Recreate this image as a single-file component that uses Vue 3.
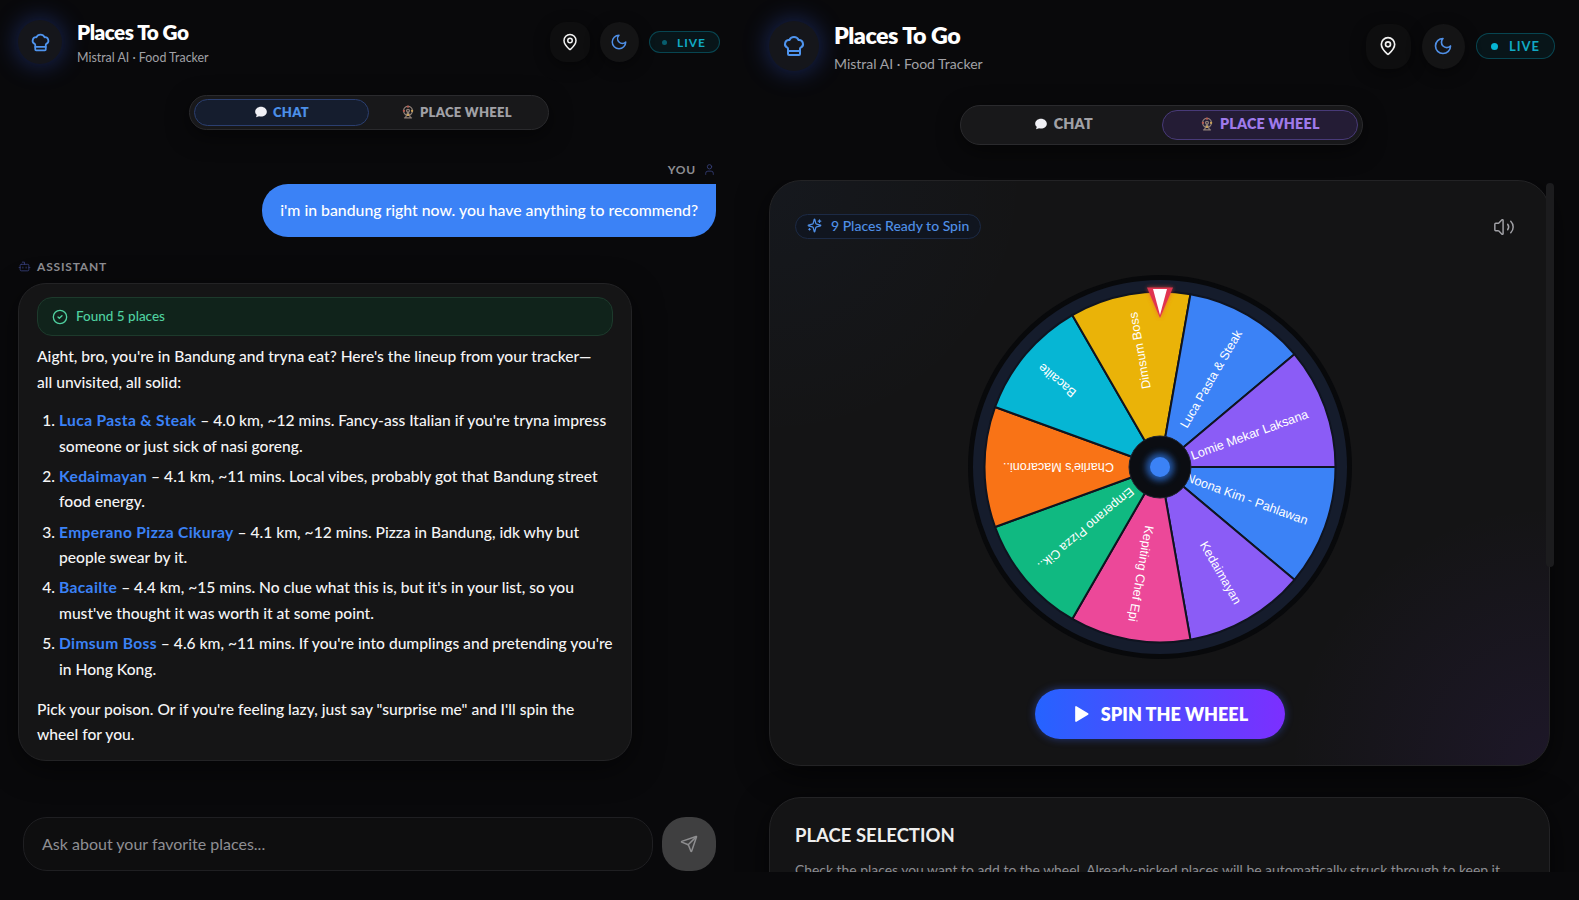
<script setup>
const places = [
  { name: 'Luca Pasta & Steak', rest: " – 4.0 km, ~12 mins. Fancy-ass Italian if you're tryna impress someone or just sick of nasi goreng." },
  { name: 'Kedaimayan', rest: ' – 4.1 km, ~11 mins. Local vibes, probably got that Bandung street food energy.' },
  { name: 'Emperano Pizza Cikuray', rest: ' – 4.1 km, ~12 mins. Pizza in Bandung, idk why but people swear by it.' },
  { name: 'Bacailte', rest: " – 4.4 km, ~15 mins. No clue what this is, but it's in your list, so you must've thought it was worth it at some point." },
  { name: 'Dimsum Boss', rest: " – 4.6 km, ~11 mins. If you're into dumplings and pretending you're in Hong Kong." }
]

const R = 175.5
const slices = [
  { label: 'Noona Kim - Pahlawan', color: '#3b82f6' },
  { label: 'Kedaimayan', color: '#8b5cf6' },
  { label: 'Kepiting Chef Epi', color: '#ec4899' },
  { label: 'Emperano Pizza Cik..', color: '#10b981' },
  { label: "Charlie's Macaroni..", color: '#f97316' },
  { label: 'Bacailte', color: '#06b6d4' },
  { label: 'Dimsum Boss', color: '#eab308' },
  { label: 'Luca Pasta & Steak', color: '#3b82f6' },
  { label: 'Lomie Mekar Laksana', color: '#8b5cf6' }
].map((s, i) => {
  const a0 = (i * 40 * Math.PI) / 180
  const a1 = ((i + 1) * 40 * Math.PI) / 180
  const x0 = R * Math.cos(a0)
  const y0 = R * Math.sin(a0)
  const x1 = R * Math.cos(a1)
  const y1 = R * Math.sin(a1)
  return {
    ...s,
    d: `M0 0L${x0.toFixed(2)} ${y0.toFixed(2)}A${R} ${R} 0 0 1 ${x1.toFixed(2)} ${y1.toFixed(2)}Z`,
    mid: i * 40 + 20
  }
})
</script>

<template>
  <div class="app">
    <!-- chat view -->
    <section class="panel chat">
      <header class="head">
        <div class="brand">
          <div class="logo">
            <svg viewBox="0 0 24 24"><path d="M17 21a1 1 0 0 0 1-1v-5.35c0-.457.316-.844.727-1.041a4 4 0 0 0-2.134-7.589 5 5 0 0 0-9.186 0 4 4 0 0 0-2.134 7.588c.411.198.727.585.727 1.041V20a1 1 0 0 0 1 1Z"/><path d="M6 17h12"/></svg>
          </div>
          <div class="titles">
            <h1>Places To Go</h1>
            <p>Mistral AI · Food Tracker</p>
          </div>
        </div>
        <div class="actions">
          <button class="round pin">
            <svg viewBox="0 0 24 24"><path d="M20 10c0 4.993-5.539 10.193-7.399 11.799a1 1 0 0 1-1.202 0C9.539 20.193 4 14.993 4 10a8 8 0 0 1 16 0"/><circle cx="12" cy="10" r="3"/></svg>
          </button>
          <button class="round moon">
            <svg viewBox="0 0 24 24"><path d="M12 3a6 6 0 0 0 9 9 9 9 0 1 1-9-9Z"/></svg>
          </button>
          <div class="live"><i></i>LIVE</div>
        </div>
      </header>

      <div class="tabs-wrap">
        <div class="tabs">
          <button class="tab on-blue">
            <svg class="bubble" viewBox="0 0 24 24"><path d="M12 3c5.500 0 10 3.700 10 8.400s-4.500 8.400-10 8.400c-1.200 0-2.300-.2-3.300-.5L3.500 21l1.300-4.300C3 15.200 2 13.400 2 11.400 2 6.700 6.500 3 12 3Z"/></svg>
            CHAT
          </button>
          <button class="tab">
            <svg class="ferris" viewBox="0 0 24 24"><path d="M8 21l4-9 4 9M6 22h12"/><circle cx="12" cy="10" r="7.500"/><circle cx="12" cy="10" r="2.500"/><circle cx="12" cy="2.800" r="2" class="c1"/><circle cx="19" cy="10" r="2" class="c2"/><circle cx="5" cy="10" r="2" class="c1"/><circle cx="12" cy="17" r="2" class="c2"/></svg>
            PLACE WHEEL
          </button>
        </div>
      </div>

      <div class="who you">
        <span>YOU</span>
        <svg viewBox="0 0 24 24"><path d="M19 21v-2a4 4 0 0 0-4-4H9a4 4 0 0 0-4 4v2"/><circle cx="12" cy="7" r="4"/></svg>
      </div>
      <div class="user-row">
        <div class="bubble-msg">i'm in bandung right now. you have anything to recommend?</div>
      </div>

      <div class="who bot">
        <svg viewBox="0 0 24 24"><path d="M12 8V4H8"/><rect width="16" height="12" x="4" y="8" rx="2"/><path d="M2 14h2"/><path d="M20 14h2"/><path d="M15 13v2"/><path d="M9 13v2"/></svg>
        <span>ASSISTANT</span>
      </div>
      <article class="answer">
        <div class="found">
          <svg viewBox="0 0 24 24"><circle cx="12" cy="12" r="10"/><path d="m9 12 2 2 4-4"/></svg>
          Found 5 places
        </div>
        <p>Aight, bro, you're in Bandung and tryna eat? Here's the lineup from your tracker—<br>all unvisited, all solid:</p>
        <ol>
          <li v-for="p in places" :key="p.name"><b>{{ p.name }}</b>{{ p.rest }}</li>
        </ol>
        <p>Pick your poison. Or if you're feeling lazy, just say "surprise me" and I'll spin the wheel for you.</p>
      </article>

      <div class="composer">
        <div class="input">Ask about your favorite places...</div>
        <button class="send">
          <svg viewBox="0 0 24 24"><path d="M14.536 21.686a.5.5 0 0 0 .937-.024l6.5-19a.496.496 0 0 0-.635-.635l-19 6.500a.5.5 0 0 0-.024.937l7.930 3.180a2 2 0 0 1 1.112 1.110z"/><path d="m21.854 2.147-10.940 10.939"/></svg>
        </button>
      </div>
    </section>

    <!-- wheel view, same app at a larger zoom -->
    <section class="panel wheel">
      <header class="head">
        <div class="brand">
          <div class="logo">
            <svg viewBox="0 0 24 24"><path d="M17 21a1 1 0 0 0 1-1v-5.35c0-.457.316-.844.727-1.041a4 4 0 0 0-2.134-7.589 5 5 0 0 0-9.186 0 4 4 0 0 0-2.134 7.588c.411.198.727.585.727 1.041V20a1 1 0 0 0 1 1Z"/><path d="M6 17h12"/></svg>
          </div>
          <div class="titles">
            <h1>Places To Go</h1>
            <p>Mistral AI · Food Tracker</p>
          </div>
        </div>
        <div class="actions">
          <button class="round pin">
            <svg viewBox="0 0 24 24"><path d="M20 10c0 4.993-5.539 10.193-7.399 11.799a1 1 0 0 1-1.202 0C9.539 20.193 4 14.993 4 10a8 8 0 0 1 16 0"/><circle cx="12" cy="10" r="3"/></svg>
          </button>
          <button class="round moon">
            <svg viewBox="0 0 24 24"><path d="M12 3a6 6 0 0 0 9 9 9 9 0 1 1-9-9Z"/></svg>
          </button>
          <div class="live"><i></i>LIVE</div>
        </div>
      </header>

      <div class="tabs-wrap">
        <div class="tabs">
          <button class="tab">
            <svg class="bubble" viewBox="0 0 24 24"><path d="M12 3c5.500 0 10 3.700 10 8.400s-4.500 8.400-10 8.400c-1.200 0-2.300-.2-3.300-.5L3.500 21l1.300-4.300C3 15.200 2 13.400 2 11.400 2 6.700 6.500 3 12 3Z"/></svg>
            CHAT
          </button>
          <button class="tab on-violet">
            <svg class="ferris" viewBox="0 0 24 24"><path d="M8 21l4-9 4 9M6 22h12"/><circle cx="12" cy="10" r="7.500"/><circle cx="12" cy="10" r="2.500"/><circle cx="12" cy="2.800" r="2" class="c1"/><circle cx="19" cy="10" r="2" class="c2"/><circle cx="5" cy="10" r="2" class="c1"/><circle cx="12" cy="17" r="2" class="c2"/></svg>
            PLACE WHEEL
          </button>
        </div>
      </div>

      <div class="scroller">
        <div class="thumb"></div>
        <div class="card spin-card">
          <div class="spin-top">
            <div class="ready">
              <svg viewBox="0 0 24 24"><path d="M9.937 15.5A2 2 0 0 0 8.5 14.063l-6.135-1.582a.5.5 0 0 1 0-.962L8.5 9.936A2 2 0 0 0 9.937 8.5l1.582-6.135a.5.5 0 0 1 .963 0L14.063 8.5A2 2 0 0 0 15.5 9.937l6.135 1.581a.5.5 0 0 1 0 .964L15.5 14.063a2 2 0 0 0-1.437 1.437l-1.582 6.135a.5.5 0 0 1-.963 0z"/><path d="M20 3v4"/><path d="M22 5h-4"/><path d="M4 17v2"/><path d="M5 18H3"/></svg>
              9 Places Ready to Spin
            </div>
            <svg class="sound" viewBox="0 0 24 24"><path d="M11 4.702a.705.705 0 0 0-1.203-.498L6.413 7.587A1.4 1.4 0 0 1 5.416 8H3a1 1 0 0 0-1 1v6a1 1 0 0 0 1 1h2.416a1.4 1.4 0 0 1 .997.413l3.383 3.384A.705.705 0 0 0 11 19.298z"/><path d="M16 9a5 5 0 0 1 0 6"/><path d="M19.364 18.364a9 9 0 0 0 0-12.728"/></svg>
          </div>

          <svg class="wheel-svg" viewBox="-195 -195 390 390" width="390" height="390">
            <defs>
              <filter id="pointer-glow" x="-50%" y="-50%" width="200%" height="200%">
                <feGaussianBlur stdDeviation="2" />
              </filter>
              <filter id="dot-glow" x="-100%" y="-100%" width="300%" height="300%">
                <feGaussianBlur stdDeviation="3" />
              </filter>
            </defs>
            <circle r="192" fill="#08090b" />
            <circle r="187" fill="#151c2c" />
            <g v-for="s in slices" :key="s.label + s.mid">
              <path :d="s.d" :fill="s.color" stroke="#0f1420" stroke-width="2" />
              <text
                :transform="`rotate(${s.mid})`"
                x="157"
                y="4.500"
                text-anchor="end"
                class="slice-label"
              >{{ s.label }}</text>
            </g>
            <circle r="31" fill="#0b0d12" stroke="#1e2330" stroke-width="1" />
            <circle r="14" fill="#2f7bf0" opacity=".65" filter="url(#dot-glow)" />
            <circle r="10" fill="#3b82f6" />
            <path d="M-13 -179.500H13L0 -149Z" fill="#f0533a" opacity=".75" filter="url(#pointer-glow)" />
            <path d="M-13 -179.500H13L0 -149Z" fill="#e0344f" />
            <path d="M-7 -178H7L0 -152Z" fill="#fff" />
          </svg>

          <div class="spin-row">
            <button class="spin">
              <svg viewBox="0 0 24 24"><path d="M6 3.500v17l14-8.500Z"/></svg>
              SPIN THE WHEEL
            </button>
          </div>
        </div>

        <div class="card select-card">
          <h2>PLACE SELECTION</h2>
          <p>Check the places you want to add to the wheel. Already-picked places will be automatically struck through to keep it</p>
        </div>
      </div>
    </section>
  </div>
</template>

<style>
html, body {
  margin: 0;
  background: #09090b;
}
</style>

<style scoped>
.app {
  display: flex;
  width: 1579px;
  height: 900px;
  overflow: hidden;
  background: #09090b;
  color: #fff;
  font-family: Lato, "Noto Sans", sans-serif;
}

.panel {
  box-sizing: border-box;
  height: 900px;
  display: flex;
  flex-direction: column;
  flex: none;
}

.chat {
  width: 734px;
  padding: 0 18px;
}

.wheel {
  width: 845px;
  padding: 0 29px 0 35px;
}

svg {
  fill: none;
  stroke: currentColor;
  stroke-width: 2;
  stroke-linecap: round;
  stroke-linejoin: round;
  display: block;
}

button {
  font-family: inherit;
  border: none;
  cursor: pointer;
  padding: 0;
}

/* header */
.head {
  display: flex;
  justify-content: space-between;
  align-items: center;
}

.brand {
  display: flex;
  align-items: center;
}

.titles {
  padding-top: 3px;
}

.logo {
  display: flex;
  align-items: center;
  justify-content: center;
  border-radius: 50%;
  background: #15161b;
  color: #4f94ee;
  box-shadow: 0 0 26px rgba(59, 100, 246, 0.38);
}

h1 {
  margin: 0;
  font-weight: 800;
  letter-spacing: -0.5px;
}

.brand p {
  margin: 0;
  color: #a1a1a6;
}

.actions {
  display: flex;
  align-items: center;
}

.round {
  display: flex;
  align-items: center;
  justify-content: center;
  box-shadow: 0 4px 16px rgba(0, 0, 0, 0.45);
}

.pin {
  color: #f2f2f2;
  background: #0e0e0f;
}

.moon {
  color: #4f8fe6;
  background: #141415;
}

.live {
  display: flex;
  align-items: center;
  box-sizing: border-box;
  border: 1px solid rgba(6, 182, 212, 0.3);
  background: rgba(6, 182, 212, 0.07);
  color: #11a9c4;
  font-weight: 700;
  letter-spacing: 1px;
}

.live i {
  display: block;
  border-radius: 50%;
  background: #06b6d4;
}

.chat .head {
  height: 84px;
  margin-right: -4px;
}

.chat .logo {
  width: 44px;
  height: 44px;
  margin-right: 15px;
}

.chat .logo svg {
  width: 21px;
  height: 21px;
}

.chat h1 {
  font-size: 20.700px;
  line-height: 26px;
}

.chat .brand p {
  font-size: 12.400px;
  line-height: 20px;
  margin-top: 3px;
}

.chat .actions {
  gap: 10px;
}

.chat .round {
  width: 40px;
  height: 40px;
  border-radius: 16px;
}

.chat .moon {
  width: 39px;
  border-radius: 50%;
}

.chat .round svg {
  width: 18px;
  height: 18px;
}

.chat .live {
  height: 22px;
  padding: 0 13px 0 12px;
  gap: 10px;
  border-radius: 11px;
  font-size: 12px;
}

.chat .live i {
  width: 5px;
  height: 5px;
  opacity: 0.45;
}

.wheel .head {
  height: 92px;
  margin-right: -5px;
}

.wheel .logo {
  width: 50px;
  height: 50px;
  margin-right: 15px;
}

.wheel .logo svg {
  width: 24px;
  height: 24px;
}

.wheel h1 {
  font-size: 23.300px;
  line-height: 30px;
}

.wheel .brand p {
  font-size: 14px;
  line-height: 22px;
  margin-top: 3px;
}

.wheel .actions {
  gap: 11px;
}

.wheel .round {
  width: 45px;
  height: 45px;
  border-radius: 18px;
}

.wheel .moon {
  width: 43px;
  border-radius: 50%;
}

.wheel .round svg {
  width: 20px;
  height: 20px;
}

.wheel .live {
  height: 26px;
  padding: 0 14px;
  gap: 11px;
  border-radius: 13px;
  font-size: 13px;
}

.wheel .live i {
  width: 7px;
  height: 7px;
}

/* tabs */
.tabs-wrap {
  display: flex;
  justify-content: center;
}

.tabs {
  display: flex;
  box-sizing: border-box;
  background: #18181a;
  border: 1px solid #2a2a2d;
  box-shadow: 0 6px 22px rgba(0, 0, 0, 0.5);
}

.tab {
  flex: 1;
  display: flex;
  align-items: center;
  justify-content: center;
  background: transparent;
  border: 1px solid transparent;
  color: #a1a1a6;
  font-weight: 800;
  letter-spacing: 0.2px;
}

.tab .bubble {
  fill: #f0f0f5;
  stroke: none;
}

.ferris {
  stroke: #8f8078;
  stroke-width: 2.200;
}

.ferris .c1 {
  fill: #b65c52;
  stroke: none;
}

.ferris .c2 {
  fill: #c9a15a;
  stroke: none;
}

.on-blue {
  color: #4b8fe8;
  background: #151d2e;
  border-color: #2b3f70;
}

.on-violet {
  color: #9f7aea;
  background: #241c35;
  border-color: #483a78;
}

.chat .tabs-wrap {
  margin-top: 11px;
  padding-left: 4px;
}

.chat .tabs {
  width: 360px;
  height: 35px;
  padding: 3px 4px;
  border-radius: 18px;
}

.chat .tab {
  height: 27px;
  gap: 5px;
  padding-bottom: 2px;
  border-radius: 14px;
  font-size: 13px;
  letter-spacing: 0.3px;
}

.chat .tab svg {
  width: 14px;
  height: 14px;
}

.wheel .tabs-wrap {
  margin-top: 13px;
  padding-left: 4px;
}

.wheel .tabs {
  width: 403px;
  height: 40px;
  padding: 4px;
  border-radius: 20px;
}

.wheel .tab {
  height: 30px;
  gap: 6px;
  padding-bottom: 3px;
  border-radius: 15px;
  font-size: 14.300px;
}

.wheel .tab svg {
  width: 14px;
  height: 14px;
}

/* messages */
.who {
  display: flex;
  align-items: center;
  color: #8e8e93;
  font-size: 12px;
  font-weight: 700;
  letter-spacing: 0.8px;
}

.who svg {
  width: 13px;
  height: 13px;
  color: #37407a;
  stroke-width: 1.600;
}

.you {
  justify-content: flex-end;
  gap: 7px;
  margin-top: 30px;
  height: 18px;
}

.user-row {
  display: flex;
  justify-content: flex-end;
  margin-top: 6px;
}

.bubble-msg {
  box-sizing: border-box;
  height: 53px;
  padding: 0 18px 2px;
  display: flex;
  align-items: center;
  background: #3b82f6;
  border-radius: 26px 0 26px 26px;
  font-size: 15.800px;
  font-weight: 500;
  color: #fff;
}

.bot {
  gap: 6px;
  margin-top: 20px;
  height: 18px;
}

.answer {
  box-sizing: border-box;
  width: 614px;
  margin-top: 8px;
  padding: 13px 18px 0;
  height: 478px;
  background: #151516;
  border: 1px solid #232325;
  border-radius: 28px;
  box-shadow: 0 8px 30px rgba(0, 0, 0, 0.5);
  font-size: 15.600px;
  font-weight: 500;
  line-height: 25.500px;
  color: #f4f4f5;
}

.found {
  display: flex;
  align-items: center;
  gap: 8px;
  box-sizing: border-box;
  height: 39px;
  padding: 0 14px;
  background: #10231b;
  border: 1px solid #1d3a2c;
  border-radius: 15px;
  color: #4fd1a0;
  font-size: 13.500px;
}

.found svg {
  width: 16px;
  height: 16px;
}

.answer p {
  margin: 8px 0 0;
}

.answer ol {
  margin: 13px 0 0;
  padding: 0 0 0 22px;
}

.answer li {
  margin-bottom: 4.800px;
}

.answer li:last-child {
  margin-bottom: 14.500px;
}

.answer li b {
  color: #3b82f6;
  font-weight: 700;
  letter-spacing: 0.35px;
}

.composer {
  display: flex;
  gap: 9px;
  margin-top: 56px;
}

.input {
  flex: 1;
  box-sizing: border-box;
  height: 54px;
  margin-left: 5px;
  padding: 0 18px 2px;
  display: flex;
  align-items: center;
  background: #0e0e0f;
  border: 1px solid #1f1f22;
  border-radius: 24px;
  color: #8e8e93;
  font-size: 16px;
}

.send {
  width: 54px;
  height: 54px;
  display: flex;
  align-items: center;
  justify-content: center;
  background: #3f3f40;
  color: #8e8e90;
  border-radius: 24px;
}

.send svg {
  width: 18px;
  height: 18px;
}

/* wheel view */
.scroller {
  position: relative;
  height: 692px;
  margin: 35px -29px 0 -35px;
  padding: 0 29px 0 35px;
  overflow: hidden;
}

.thumb {
  position: absolute;
  top: 3px;
  right: 25px;
  width: 8px;
  height: 384px;
  border-radius: 4px;
  background: #1c1c1e;
  z-index: 2;
}

.card {
  box-sizing: border-box;
  background: #141415;
  border: 1px solid #232325;
  border-radius: 32px;
  box-shadow: 0 8px 32px rgba(0, 0, 0, 0.6);
}

.spin-card {
  height: 586px;
  padding: 33px 25px 0;
  background:
    radial-gradient(circle at 100% 100%, rgba(124, 58, 237, 0.09), transparent 260px),
    radial-gradient(circle at 0 0, rgba(59, 130, 246, 0.04), transparent 260px),
    #141415;
}

.spin-top {
  display: flex;
  align-items: center;
  justify-content: space-between;
  padding-right: 9px;
}

.ready {
  display: flex;
  align-items: center;
  gap: 9px;
  box-sizing: border-box;
  height: 25px;
  padding: 0 11px 2px;
  background: #10151f;
  border: 1px solid #1c2a45;
  border-radius: 13px;
  color: #4f8fe6;
  font-size: 14px;
  font-weight: 500;
}

.ready svg {
  width: 15px;
  height: 15px;
}

.sound {
  width: 22px;
  height: 22px;
  color: #a1a1a6;
  stroke-width: 1.600;
}

.wheel-svg {
  margin: 33px auto 0;
  stroke: none;
}

.slice-label {
  fill: #fff;
  font-family: "Liberation Sans", Arial, sans-serif;
  font-size: 12.600px;
}

.spin-row {
  display: flex;
  justify-content: center;
  margin-top: 27px;
}

.spin {
  width: 250px;
  height: 50px;
  display: flex;
  align-items: center;
  justify-content: center;
  gap: 10px;
  border-radius: 25px;
  background: linear-gradient(90deg, #2563ff, #7c2fff);
  box-shadow: 0 0 8px rgba(59, 100, 246, 0.45);
  color: #fff;
  font-size: 18px;
  font-weight: 800;
}

.spin svg {
  width: 20px;
  height: 20px;
  fill: #fff;
  stroke: #fff;
}

.select-card {
  margin-top: 31px;
  height: 200px;
  padding: 25px 25px 0;
}

.select-card h2 {
  margin: 0;
  font-size: 18.500px;
  line-height: 24px;
  font-weight: 700;
  color: #eee;
}

.select-card p {
  margin: 12px 0 0;
  font-size: 13.900px;
  line-height: 22px;
  color: #8e8e93;
}
</style>
